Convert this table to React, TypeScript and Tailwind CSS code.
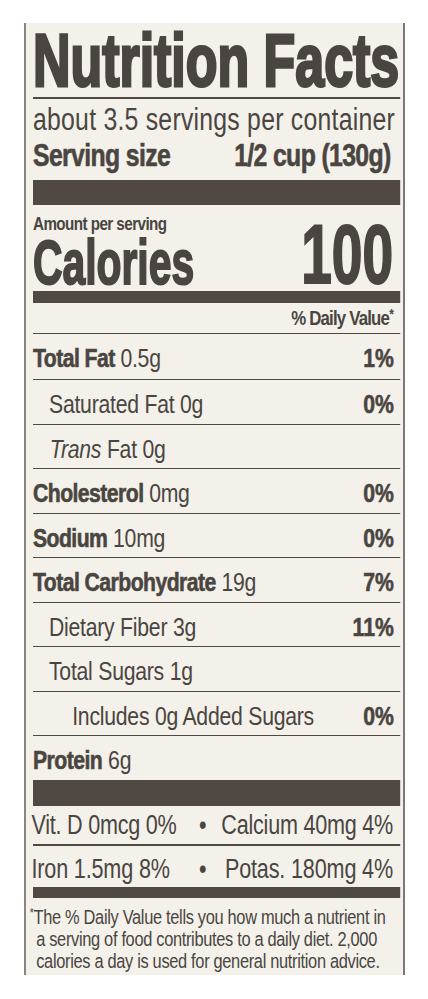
const font = {
  fontFamily: '"Liberation Sans", Arial, "Helvetica Neue", sans-serif',
};

type Row = {
  name: string;
  amount: string;
  dv?: string;
  bold?: boolean;
  indent?: string;
  italic?: string;
  h: string;
};

// widths below are in the un-squeezed column (0.8 of them shows on screen)
const rows: Row[] = [
  { name: "Total Fat", amount: "0.5g", dv: "1%", bold: true, h: "h-[46px]" },
  { name: "Saturated Fat", amount: "0g", dv: "0%", indent: "pl-[20px]", h: "h-[44.5px]" },
  { name: "", italic: "Trans", amount: "Fat 0g", indent: "pl-[21px]", h: "h-[44.5px]" },
  { name: "Cholesterol", amount: "0mg", dv: "0%", bold: true, h: "h-[44.5px]" },
  { name: "Sodium", amount: "10mg", dv: "0%", bold: true, h: "h-[44.5px]" },
  { name: "Total Carbohydrate", amount: "19g", dv: "7%", bold: true, h: "h-[44.5px]" },
  { name: "Dietary Fiber", amount: "3g", dv: "11%", indent: "pl-[20px]", h: "h-[44.5px]" },
  { name: "Total Sugars", amount: "1g", indent: "pl-[20px]", h: "h-[44.5px]" },
  { name: "Includes 0g Added Sugars", amount: "", dv: "0%", indent: "pl-[49px]", h: "h-[44.5px]" },
];

function NutrientRow({ row }: { row: Row }) {
  return (
    <div
      className={`flex ${row.h} items-start justify-between whitespace-nowrap border-b border-[#4f4843] pr-[8px] text-[26.5px] leading-[48px]`}
    >
      <div className={`${row.indent ?? ""} tracking-[-0.3px]`}>
        {row.italic && <span className="italic">{row.italic} </span>}
        {row.name && (
          <span className={row.bold ? "font-bold tracking-[-0.7px] [-webkit-text-stroke:0.6px_#4a4541]" : ""}>
            {row.name}
          </span>
        )}
        {row.amount && <span> {row.amount}</span>}
      </div>
      {row.dv && <div className="font-bold [-webkit-text-stroke:0.6px_#4a4541]">{row.dv}</div>}
    </div>
  );
}

export default function App() {
  return (
    <div className="h-[999px] w-[428px] overflow-hidden bg-white pl-[24px] pt-[23px]" style={font}>
      <div className="h-[952px] w-[381px] border-l-2 border-r-2 border-l-[#8a8580] border-r-[#7d7873] bg-[#f3f1ea] pl-[7px] pr-[3px] text-[#4a4541]">
        {/* column laid out wide, squeezed to look like a condensed face */}
        <div className="w-[459px] origin-left scale-x-[0.8]">
          <h1 className="h-[74px] origin-left scale-x-[0.865] whitespace-nowrap text-[75px] font-bold leading-[74px] [-webkit-text-stroke:3px_#4a4541]">
            Nutrition Facts
          </h1>
          <div className="h-[2px] bg-[#4f4843]" />

          <div className="mt-[5px] h-[32px] whitespace-nowrap text-[31px] leading-[32px] tracking-[0.3px]">
            about 3.5 servings per container
          </div>
          <div className="mt-[4px] flex h-[32px] justify-between whitespace-nowrap pr-[12px] text-[31px] font-bold leading-[32px] tracking-[-0.8px] [-webkit-text-stroke:0.6px_#4a4541]">
            <span>Serving size</span>
            <span>1/2 cup (130g)</span>
          </div>

          <div className="mt-[8px] h-[25px] bg-[#4f4843]" />

          <div className="flex items-end justify-between pr-[9px]">
            <div>
              <div className="mt-[9px] h-[20px] whitespace-nowrap text-[19px] font-bold leading-[20px] tracking-[-0.7px]">
                Amount per serving
              </div>
              <div className="h-[56px] origin-left scale-x-[0.81] text-[63px] font-bold leading-[56px] [-webkit-text-stroke:2px_#4a4541]">
                Calories
              </div>
            </div>
            <div className="mb-[3px] origin-right scale-x-[0.82] text-[84px] font-bold leading-[66px] [-webkit-text-stroke:2px_#4a4541]">
              100
            </div>
          </div>

          <div className="mt-[1px] h-[12px] bg-[#4f4843]" />

          <div className="mt-[3px] h-[24px] whitespace-nowrap pr-[9px] text-right text-[21px] font-bold leading-[24px] tracking-[-1px]">
            % Daily Value<span className="align-top text-[15px] leading-[15px]">*</span>
          </div>
          <div className="mt-[3px] border-b border-[#4f4843]" />

          {rows.map((r, i) => (
            <NutrientRow key={i} row={r} />
          ))}
          <div className="h-[44px] whitespace-nowrap text-[26.5px] leading-[48px]">
            <span className="font-bold tracking-[-0.7px] [-webkit-text-stroke:0.6px_#4a4541]">Protein</span> 6g
          </div>

          <div className="h-[26px] bg-[#4f4843]" />

          <div className="-ml-[2px] flex h-[38px] whitespace-nowrap pr-[9px] text-[27px] leading-[38px] tracking-[-0.3px]">
            <span className="w-[202px]">Vit. D 0mcg 0%</span>
            <span className="w-[24px] text-center">•</span>
            <span className="flex-1 text-right">Calcium 40mg 4%</span>
          </div>
          <div className="h-[2px] bg-[#4f4843]" />
          <div className="-ml-[2px] flex h-[41px] whitespace-nowrap pr-[9px] pt-[6px] text-[27px] leading-[35px] tracking-[-0.2px]">
            <span className="w-[202px]">Iron 1.5mg 8%</span>
            <span className="w-[24px] text-center">•</span>
            <span className="flex-1 text-right">Potas. 180mg 4%</span>
          </div>

          <div className="h-[11px] bg-[#4f4843]" />

          <div className="-ml-[4px] mt-[8px] whitespace-nowrap text-[20.5px] leading-[22px] tracking-[-0.4px]">
            <div>
              <span className="align-top text-[13px] leading-[13px]">*</span>The % Daily Value tells you how much a nutrient in
            </div>
            <div className="pl-[8px]">a serving of food contributes to a daily diet. 2,000</div>
            <div className="pl-[8px]">calories a day is used for general nutrition advice.</div>
          </div>
        </div>
      </div>
    </div>
  );
}
